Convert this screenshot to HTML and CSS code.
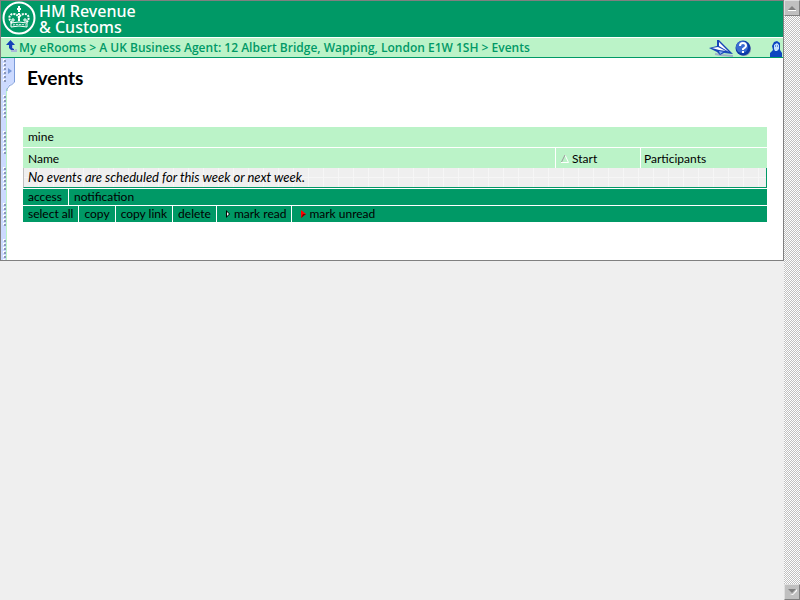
FILE: index.html
```html
<!DOCTYPE html>
<html lang="en">
<head>
  <meta charset="UTF-8">
  <meta name="viewport" content="width=device-width, initial-scale=1.0">
  <title>Events</title>
  <link rel="stylesheet" href="styles.css">
</head>
<body>
  <div class="viewport">
    <div class="room">
      <header class="banner">
        <svg class="crest" width="34" height="36" viewBox="0 0 34 36" fill="none" stroke="#fff">
          <circle cx="17" cy="17" r="15.500" stroke-width="2"/>
          <path d="M17 5v6M15 8h4" stroke-width="2"/>
          <path d="M10 22C5 17 8 13 11 13c3 0 5 1 6 4 1-3 3-4 6-4 3 0 6 4 1 9" stroke-width="2" stroke-dasharray="2 1"/>
          <path d="M17 12v9" stroke-width="2" stroke-dasharray="2 1"/>
          <path d="M11 17v4M23 17v4M9 19h4M21 19h4"/>
          <path d="M9 22q8-2 16 0v4q-8-2-16 0z"/>
          <path d="M11 24q6-1 13 0" stroke-dasharray="2 1"/>
        </svg>
        <div class="brand">HM Revenue<br>&amp; Customs</div>
      </header>

      <nav class="crumbs">
        <a href="#" class="up" aria-label="Up one level">
          <svg width="12" height="14" viewBox="0 0 12 14">
            <path d="M7 6v6h4v-2" fill="none" stroke="#a9b8d8" stroke-width="2"/>
            <path d="M5.500 1L10 6H7v3l2 1v1H6L4 9V6H1z" fill="#1440b8"/>
          </svg>
        </a>
        <div class="trail"><a href="#">My eRooms</a> &gt; <a href="#">A UK Business Agent: 12 Albert Bridge, Wapping, London E1W 1SH</a> &gt; <a href="#">Events</a></div>
        <div class="tools">
          <a href="#" aria-label="Send">
            <svg width="26" height="18" viewBox="0 0 26 18">
              <path d="M6 15l6 1 12 1" fill="none" stroke="#9fb0c8" stroke-width="2"/>
              <path d="M0 9l8-2V1h2l14 14-9-1-4 2-3-3z" fill="#1746b8"/>
              <path d="M3 9l6-1 8 4-7-1zM10 3l10 10L10 7z" fill="#fff"/>
              <path d="M10 12l10 2-6-1-3 2z" fill="#86abf0"/>
            </svg>
          </a>
          <a href="#" aria-label="Help">
            <svg width="18" height="18" viewBox="0 0 18 18">
              <circle cx="9" cy="10" r="7" fill="#8794ad"/>
              <circle cx="8" cy="9" r="7.500" fill="#0d3ca8"/>
              <circle cx="7" cy="8" r="6" fill="#3a6cd0"/>
              <path d="M5 7q0-3 3-3t3 3q0 1-3 3v1M8 12v2" fill="none" stroke="#fff" stroke-width="2"/>
            </svg>
          </a>
          <a href="#" class="member" aria-label="Member">
            <svg width="14" height="17" viewBox="0 0 14 17">
              <path d="M1 17v-4l3-3-1-4 2-4 3-1 3 2v7l2 3v4z" fill="#0c46c0"/>
              <path d="M5 5l3-2 2 2v4l-2 2H6L5 9z" fill="#c4e2ff"/>
              <path d="M6 6h1M8 6h1" stroke="#0c46c0"/>
            </svg>
          </a>
        </div>
      </nav>

      <div class="content">
        <div class="rail">
          <svg class="rail-dots" width="6" height="100%">
            <defs>
              <pattern id="dots" width="6" height="36" patternUnits="userSpaceOnUse">
                <path d="M2 2h2M2 6h2M2 10h2M2 14h2M2 18h2M2 22h2" stroke="#fff" stroke-width="2"/>
                <path d="M3 3h2M3 7h2M3 11h2M3 15h2M3 19h2M3 23h2" stroke="#8b97b8" stroke-width="2"/>
              </pattern>
            </defs>
            <rect width="6" height="100%" fill="url(#dots)"/>
          </svg>
          <button type="button" class="rail-tab" aria-label="Show side panel">
            <svg width="14" height="34" viewBox="0 0 14 34">
              <path d="M5 0h8v24l-2 2H9l-4 5z" fill="#ccdaff"/>
              <path d="M13.500 0v24l-3 3H9l-3 4v2" fill="none" stroke="#7b9bd9"/>
              <path d="M7 10v6l4-3z" fill="#7b9bd9"/>
            </svg>
          </button>
        </div>

        <main class="main">
          <h1>Events</h1>

          <div class="listing">
            <div class="filter">mine</div>
            <table class="events">
              <thead>
                <tr>
                  <th class="col-name">Name</th>
                  <th class="col-start">
                    <svg width="8" height="8" viewBox="0 0 8 8" fill="none">
                      <path d="M0 7.500h7.500L4 0" stroke="#fff"/>
                      <path d="M.5 7L4 0" stroke="#999"/>
                    </svg>
                    Start
                  </th>
                  <th class="col-people">Participants</th>
                </tr>
              </thead>
              <tbody>
                <tr>
                  <td colspan="3">No events are scheduled for this week or next week.</td>
                </tr>
              </tbody>
            </table>

            <div class="bar tabs">
              <button type="button">access</button>
              <button type="button">notification</button>
            </div>
            <div class="bar">
              <button type="button">select all</button>
              <button type="button">copy</button>
              <button type="button">copy link</button>
              <button type="button">delete</button>
              <button type="button" class="mark">
                <svg width="6" height="8" viewBox="0 0 6 8"><path d="M1 0v8l4-4z" fill="#000"/><path d="M2 2v4l2-2z" fill="#fff"/></svg>
                mark read
              </button>
              <button type="button" class="mark">
                <svg width="6" height="8" viewBox="0 0 6 8"><path d="M1 0v8l5-4z" fill="#f00"/><path d="M1 8l5-4H3z" fill="#700"/></svg>
                mark unread
              </button>
            </div>
          </div>
        </main>
      </div>
    </div>
  </div>

  <div class="scroller">
    <button type="button" aria-label="Scroll up">
      <svg width="8" height="5" viewBox="0 0 8 5"><path d="M0 4l4-4 4 4z" fill="#808080"/><path d="M0 4.500h8" stroke="#fff"/></svg>
    </button>
    <button type="button" aria-label="Scroll down">
      <svg width="9" height="6" viewBox="0 0 9 6"><path d="M2 6l3-1 4-5v2L5 6z" fill="#fff"/><path d="M0 0h8L4 4z" fill="#808080"/></svg>
    </button>
  </div>
</body>
</html>
```
FILE: styles.css
```css
* {
  box-sizing: border-box;
}
body {
  margin: 0;
  min-height: 100vh;
  display: flex;
  background: #efefef;
  color: #000;
  font-family: Lato, sans-serif;
  font-size: 12px;
  line-height: 16px;
}
a {
  color: inherit;
  text-decoration: none;
}
button {
  margin: 0;
  border: 0;
  background: none;
  color: inherit;
  font: inherit;
}
svg {
  display: block;
  flex: none;
}
.viewport {
  flex: 1;
}
.room {
  border: 1px solid #808080;
  background: #fff;
}

/* banner */
.banner {
  display: flex;
  align-items: flex-start;
  gap: 3px;
  height: 36px;
  padding: 0 1px;
  background: #009966;
  color: #fff;
}
.brand {
  padding-top: 2px;
  font-family: "Noto Sans", sans-serif;
  font-size: 16px;
  line-height: 16px;
  font-weight: 500;
}

/* breadcrumb row */
.crumbs {
  display: flex;
  align-items: center;
  height: 21px;
  border-top: 1px solid #fff;
  border-bottom: 1px solid #009966;
  background: #bbf3c8;
  color: #009966;
  font-family: "Open Sans", sans-serif;
  font-weight: 600;
}
.up {
  padding: 0 2px 4px 4px;
}
.trail {
  flex: 1;
}
.tools {
  display: flex;
  align-items: flex-end;
}
.member {
  margin-left: 16px;
}

/* content */
.content {
  display: flex;
}
.rail {
  position: relative;
  width: 6px;
  border-right: 1px solid #bbf3c8;
  background: #ccdaff;
}
.rail-dots {
  position: absolute;
  top: 0;
  left: 0;
}
.rail-tab {
  position: absolute;
  top: 0;
  left: 0;
  padding: 0;
}
.main {
  flex: 1;
  padding: 8px 16px 37px;
}
h1 {
  margin: 0 4px 37px;
  font-size: 19px;
  line-height: 24px;
}
.filter {
  height: 20px;
  padding: 2px 5px;
  background: #bbf3c8;
}
.events {
  width: 100%;
  margin: 1px 0;
  border-collapse: separate;
  border-spacing: 0;
  table-layout: fixed;
}
.events th {
  height: 20px;
  padding: 2px 3px 0;
  border-left: 1px solid #fff;
  background: #bbf3c8;
  font-weight: normal;
  text-align: left;
}
.events .col-name {
  padding-left: 5px;
  border-left: 0;
}
.col-start {
  width: 85px;
}
.events .col-start {
  padding-left: 5px;
}
.col-start svg {
  display: inline-block;
}
.col-people {
  width: 127px;
}
.events td {
  height: 20px;
  padding: 0 4px 2px;
  border: solid #009966;
  border-width: 0 1px 1px 0;
  border-left: 1px solid #c0c0c0;
  background: repeating-linear-gradient(90deg, transparent 0 14px, #f6f6f6 14px 15px),
    repeating-linear-gradient(#efefef 0 9px, #f6f6f6 9px 10px);
  font-size: 13px;
  font-style: italic;
}
.bar {
  display: flex;
  height: 16px;
  margin-bottom: 1px;
  background: #009966;
}
.bar button {
  display: flex;
  align-items: center;
  gap: 3px;
  padding: 0 5px;
  border-left: 1px solid #fff;
}
.bar button:first-child {
  border-left: 0;
}
.tabs button + button {
  margin-left: 1px;
}
.bar .mark {
  padding-left: 8px;
}

/* scrollbar */
.scroller {
  display: flex;
  flex-direction: column;
  justify-content: space-between;
  width: 16px;
  background: repeating-conic-gradient(#c0c0c0 0 25%, #fff 0 50%) 0 0 / 2px 2px;
}
.scroller button {
  display: flex;
  align-items: center;
  justify-content: center;
  height: 16px;
  padding: 0;
  border: 1px solid;
  border-color: #dfdfdf #808080 #808080 #dfdfdf;
  background: #c0c0c0;
}
```
